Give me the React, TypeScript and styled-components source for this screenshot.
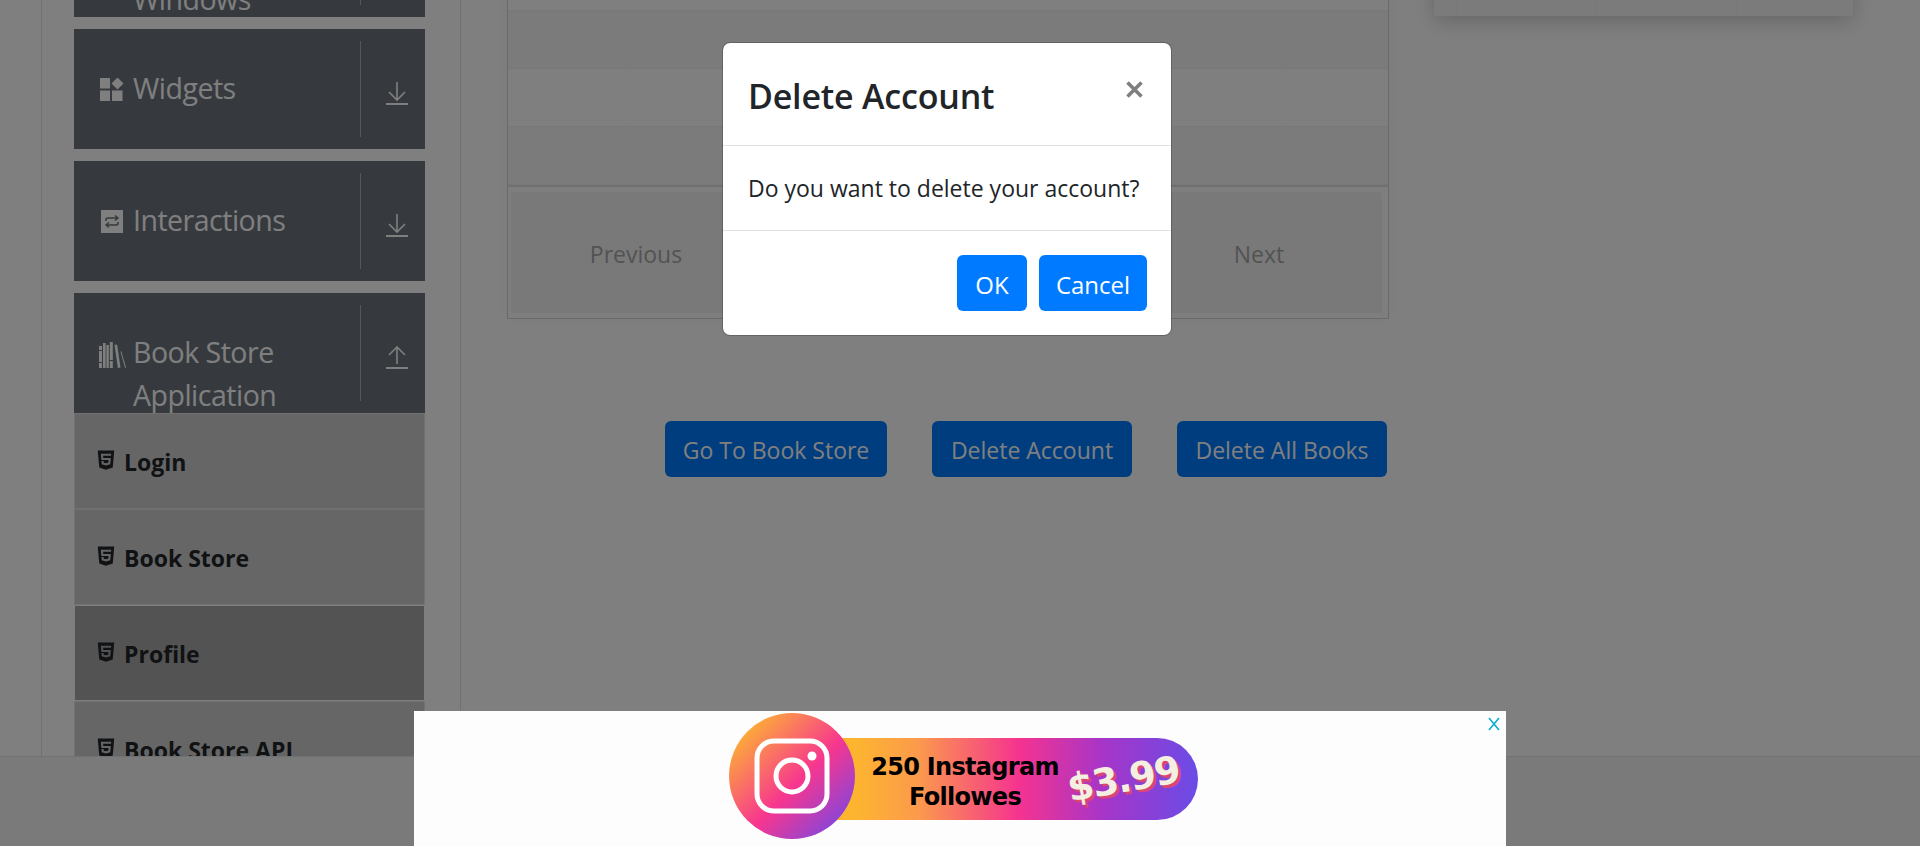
import React from "react";
import styled, { createGlobalStyle } from "styled-components";
import { FaHtml5 } from "react-icons/fa";

const Global = createGlobalStyle`
  html, body { margin: 0; padding: 0; background: #fff; overflow: hidden; }
  * { box-sizing: border-box; }
  body { font-family: "Open Sans", "Liberation Sans", sans-serif; color: #212529; }
`;

const Viewport = styled.div`
  position: relative;
  width: 1920px;
  height: 846px;
  overflow: hidden;
  background: #fff;
`;

const Scrolled = styled.div`
  display: grid;
  grid-template-columns: 420px 1fr;
  margin: -103px 0 0 41px;
`;

const Sidebar = styled.aside`
  border-left: 1px solid #dee2e6;
  border-right: 1px solid #dee2e6;
  padding: 0 35px 0 32px;
  min-height: 1000px;
`;

const GroupCard = styled.div`
  display: flex;
  height: 120px;
  margin-bottom: 12px;
  background: #6c757d;
  color: #fff;
  overflow: hidden;
`;

const GroupTitle = styled.div`
  flex: 1;
  display: flex;
  align-items: flex-start;
  padding-top: 38px;
  font-size: 28.5px;
  letter-spacing: -0.5px;
  line-height: 43px;
`;

const GroupIcon = styled.span`
  width: 59px;
  flex: none;
  display: flex;
  justify-content: center;
  padding: 11px 0 0 17px;
  svg { display: block; }
`;

const GroupText = styled.span`
  width: 226px;
`;

const GroupToggle = styled.div`
  width: 65px;
  height: 96px;
  margin-top: 12px;
  border-left: 1px solid #a9aeb4;
  display: flex;
  align-items: center;
  justify-content: center;
  padding: 8px 0 0 8px;
`;

const BookList = styled.div`
  margin: -12px 0 0;
`;

const BookItem = styled.div<{ $active?: boolean }>`
  display: flex;
  align-items: center;
  gap: 7px;
  height: 96px;
  padding: 2px 0 0 20px;
  border: 1px solid ${(p) => (p.$active ? "#fff" : "#e2e2e2")};
  background: ${(p) => (p.$active ? "#a6a6a6" : "#cdcdcd")};
  font-size: 23px;
  font-weight: 700;
  svg { margin-top: -5px; }
`;

const Main = styled.main`
  padding-left: 46px;
  display: grid;
  grid-template-columns: 882px 419px;
  gap: 45px;
  align-items: start;
`;

const ProfileColumn = styled.div`
  display: flex;
  flex-direction: column;
`;

const Table = styled.div`
  border: 1px solid #d4d4d4;
  border-top: 0;
  box-shadow: 0 0 15px rgba(0, 0, 0, 0.04);
`;

const TableTop = styled.div`
  height: 114px;
  border-bottom: 1px solid #f0f0f0;
`;

const Row = styled.div<{ $odd?: boolean }>`
  display: grid;
  grid-template-columns: 119px 1fr 106px;
  height: 58px;
  border-bottom: 1px solid #f0f0f0;
  background: ${(p) => (p.$odd ? "#f7f7f7" : "#fff")};
`;

const Cell = styled.div`
  border-right: 1px solid rgba(0, 0, 0, 0.02);
  &:last-child { border-right: 0; }
`;

const TableEnd = styled.div`
  height: 2px;
  background: #e0e0e0;
`;

const Pagination = styled.div`
  display: grid;
  grid-template-columns: 250px 1fr 246px;
  gap: 0;
  height: 131px;
  padding: 5px 6px 5px 3px;
  background: #fdfdfd;
`;

const PageButton = styled.div`
  display: flex;
  align-items: center;
  justify-content: center;
  padding-top: 3px;
  border-radius: 3px;
  background: #f3f3f3;
  color: #a6a6a6;
  font-size: 23px;
`;

const PageMiddle = styled.div`
  background: #f3f3f3;
`;

const ActionRow = styled.div`
  display: grid;
  grid-template-columns: 222px 200px 210px;
  gap: 45px;
  margin: 102px 0 0 158px;
`;

const Button = styled.button`
  height: 56px;
  padding: 2px 0 0;
  border: 0;
  border-radius: 6px;
  background: #007bff;
  color: #fff;
  font: 400 23px "Open Sans", "Liberation Sans", sans-serif;
`;

const SidePanel = styled.div`
  height: 119px;
  background: repeating-linear-gradient(90deg, #f6f6f6 0 22px, #f3f3f3 22px 23px, #f6f6f6 23px 70px);
  box-shadow: 0 5px 20px rgba(0, 0, 0, 0.2);
`;

const Footer = styled.footer`
  position: absolute;
  left: 0;
  right: 0;
  bottom: 0;
  height: 90px;
  background: #f4f4f4;
  border-top: 1px solid #dee2e6;
`;

const Backdrop = styled.div`
  position: absolute;
  inset: 0;
  background: rgba(0, 0, 0, 0.5);
`;

const Modal = styled.div`
  position: absolute;
  left: 722px;
  top: 42px;
  width: 450px;
  height: 294px;
  background: #fff;
  border: 1px solid rgba(0, 0, 0, 0.2);
  border-radius: 8px;
  background-clip: padding-box;
  display: flex;
  flex-direction: column;
`;

const ModalHeader = styled.div`
  height: 103px;
  flex: none;
  display: flex;
  justify-content: space-between;
  padding: 0 25px;
  border-bottom: 1px solid #dee2e6;
`;

const ModalTitle = styled.h5`
  margin: 26px 0 0;
  font-size: 34px;
  letter-spacing: -0.2px;
  line-height: 54px;
  font-weight: 600;
  color: #212529;
`;

const CloseButton = styled.button`
  width: 24px;
  height: 32px;
  margin-top: 30px;
  padding: 0;
  border: 0;
  background: none;
  svg { display: block; margin: auto; }
`;

const ModalBody = styled.div`
  height: 85px;
  flex: none;
  display: flex;
  align-items: center;
  padding: 0 25px;
  font-size: 23px;
  border-bottom: 1px solid #dee2e6;
`;

const ModalFooter = styled.div`
  flex: 1;
  display: flex;
  justify-content: flex-end;
  gap: 12px;
  padding: 24px 24px 0 0;
`;

const ModalButton = styled(Button)<{ $w: number }>`
  width: ${(p) => p.$w}px;
  font-size: 24px;
`;

const Ad = styled.div`
  position: absolute;
  left: 414px;
  bottom: 0;
  width: 1092px;
  height: 135px;
  padding: 2px 0 0 315px;
  background: #fefdfd;
  display: flex;
  align-items: flex-start;
`;

const AdClose = styled.span`
  position: absolute;
  right: 5px;
  top: 6px;
  line-height: 0;
`;

const AdCircle = styled.div`
  position: relative;
  width: 126px;
  height: 126px;
  flex: none;
  border-radius: 50%;
  background: linear-gradient(135deg, #fdbb2e 8%, #f7368f 55%, #7a47e2 92%);
  display: flex;
  align-items: center;
  justify-content: center;
`;

const AdPill = styled.div`
  width: 373px;
  height: 82px;
  margin: 25px 0 0 -30px;
  padding-left: 42px;
  border-radius: 0 41px 41px 0;
  background: linear-gradient(90deg, #fdb52f 8%, #fb9a4c 25%, #f5338f 52%, #a535c9 75%, #6a4ce6 100%);
  display: flex;
  align-items: center;
`;

const AdCopy = styled.div`
  width: 196px;
  padding-top: 5px;
  text-align: center;
  color: #000;
  font: 700 24px/30px "DejaVu Sans", sans-serif;
  letter-spacing: -0.7px;
  white-space: nowrap;
`;

const AdPrice = styled.div`
  margin-left: 4px;
  color: #f5efe2;
  font: 700 38px/1 "DejaVu Sans", sans-serif;
  letter-spacing: -1.5px;
  transform: rotate(-10deg);
  text-shadow: 2px 3px 0 #d9466f;
`;

const ArrowIcon = ({ up }: { up?: boolean }) => (
  <svg width="22" height="23" viewBox="0 0 22 23" fill="none" stroke="#fff" strokeWidth="1.6">
    {up ? <path d="M11 18V1M3 9l8-8 8 8" /> : <path d="M11 0v18M3 10l8 8 8-8" />}
    <path d="M0 22h22" strokeWidth="2" />
  </svg>
);

const WidgetsIcon = () => (
  <svg width="24" height="24" viewBox="0 0 24 24" fill="#fff">
    <rect x="0" y="0" width="10" height="10.5" />
    <rect x="0" y="12.5" width="10" height="10.5" />
    <rect x="12" y="12.5" width="10.5" height="10.5" />
    <path d="M17.5-.5L23.5 5.5 17.5 11.5 11.5 5.5Z" />
  </svg>
);

const InteractionsIcon = () => (
  <svg width="22" height="23" viewBox="0 0 22 23">
    <rect width="22" height="23" fill="#fff" />
    <path d="M5 11V9.5Q5 8 7 8H16M14 5.5L17 8 14 10.5M17 12v1.5Q17 15 15 15H6M8 12.5L5 15 8 17.5" fill="none" stroke="#6c757d" strokeWidth="1.5" />
  </svg>
);

const BooksIcon = () => (
  <svg width="27" height="26" viewBox="0 0 27 26" fill="#fff">
    <path d="M0 4h3v4H0zM0 9h3v11H0zM0 21h3v5H0z" />
    <path d="M4 1h2.6v25H4zM7.4 3h2.4v23H7.4z" />
    <path d="M10.8 0h3v18h-3zM10.8 19h3v7h-3z" />
    <path d="M15.5 3l2.6-.6 3.4 23-2.6.6Z" />
    <path d="M21.4 9.6l.9-.4 4.7 16.4-.9.4Z" />
  </svg>
);

const CloseGlyph = () => (
  <svg width="17" height="17" viewBox="0 0 17 17" stroke="#7f7f7f" strokeWidth="3.6">
    <path d="M1.5 1.5l14 14M15.5 1.5l-14 14" />
  </svg>
);

const InstagramGlyph = () => (
  <svg width="78" height="78" viewBox="0 0 78 78" fill="none" stroke="#fff" strokeWidth="5">
    <rect x="4" y="4" width="70" height="70" rx="17" />
    <circle cx="39" cy="39" r="16" />
    <circle cx="59" cy="19" r="4.5" fill="#fff" stroke="none" />
  </svg>
);

const groups = [
  { name: "Alerts, Frame & Windows", icon: null as React.ReactNode, up: false },
  { name: "Widgets", icon: <WidgetsIcon />, up: false },
  { name: "Interactions", icon: <InteractionsIcon />, up: false },
  { name: "Book Store Application", icon: <BooksIcon />, up: true },
];

const books = ["Login", "Book Store", "Profile", "Book Store API"];

export default function App() {
  return (
    <Viewport>
      <Global />
      <Scrolled>
        <Sidebar>
          {groups.map((g) => (
            <GroupCard key={g.name}>
              <GroupTitle>
                <GroupIcon>{g.icon}</GroupIcon>
                <GroupText>{g.name}</GroupText>
              </GroupTitle>
              <GroupToggle>
                <ArrowIcon up={g.up} />
              </GroupToggle>
            </GroupCard>
          ))}
          <BookList>
            {books.map((b) => (
              <BookItem key={b} $active={b === "Profile"}>
                <FaHtml5 size={22} color="#212529" />
                {b}
              </BookItem>
            ))}
          </BookList>
        </Sidebar>
        <Main>
          <ProfileColumn>
            <Table>
              <TableTop />
              {[true, false, true].map((odd, i) => (
                <Row key={i} $odd={odd}>
                  <Cell />
                  <Cell />
                  <Cell />
                </Row>
              ))}
              <TableEnd />
              <Pagination>
                <PageButton>Previous</PageButton>
                <PageMiddle />
                <PageButton>Next</PageButton>
              </Pagination>
            </Table>
            <ActionRow>
              <Button>Go To Book Store</Button>
              <Button>Delete Account</Button>
              <Button>Delete All Books</Button>
            </ActionRow>
          </ProfileColumn>
          <SidePanel />
        </Main>
      </Scrolled>
      <Footer />
      <Backdrop />
      <Modal>
        <ModalHeader>
          <ModalTitle>Delete Account</ModalTitle>
          <CloseButton aria-label="Close">
            <CloseGlyph />
          </CloseButton>
        </ModalHeader>
        <ModalBody>Do you want to delete your account?</ModalBody>
        <ModalFooter>
          <ModalButton $w={70}>OK</ModalButton>
          <ModalButton $w={108}>Cancel</ModalButton>
        </ModalFooter>
      </Modal>
      <Ad>
        <AdCircle>
          <InstagramGlyph />
        </AdCircle>
        <AdPill>
          <AdCopy>
            250 Instagram
            <br />
            Followes
          </AdCopy>
          <AdPrice>$3.99</AdPrice>
        </AdPill>
        <AdClose>
          <svg width="14" height="14" viewBox="0 0 14 14" stroke="#00aecd" strokeWidth="1.5">
            <path d="M2 1l10 12M12 1L2 13" />
          </svg>
        </AdClose>
      </Ad>
    </Viewport>
  );
}
